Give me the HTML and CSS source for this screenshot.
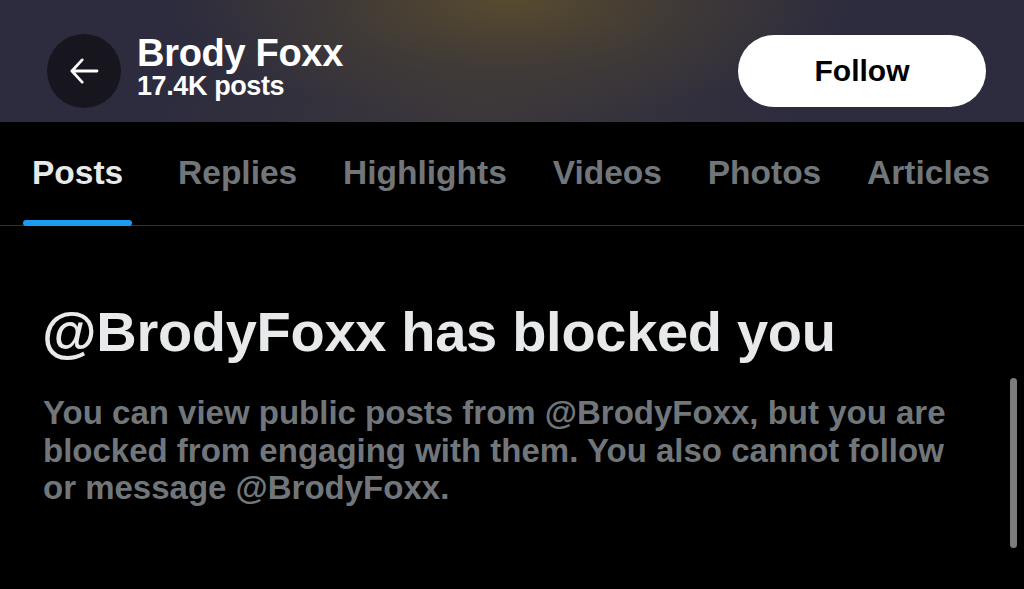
FILE: index.html
```html
<!DOCTYPE html>
<html lang="en">
<head>
<meta charset="utf-8">
<title>Brody Foxx</title>
<link rel="stylesheet" href="styles.css">
</head>
<body>
<div class="page">
  <header class="banner">
    <div class="banner-left">
      <button class="back" aria-label="Back">
        <svg viewBox="0 0 32 28" width="30" height="26"><path d="M30 14H3M14 2L3 14l11 12" fill="none" stroke="#fff" stroke-width="3" stroke-linecap="round" stroke-linejoin="round"/></svg>
      </button>
      <div class="who">
        <div class="name">Brody Foxx</div>
        <div class="count">17.4K posts</div>
      </div>
    </div>
    <button class="follow">Follow</button>
  </header>
  <nav class="tabs">
    <div class="tab active">Posts</div>
    <div class="tab">Replies</div>
    <div class="tab">Highlights</div>
    <div class="tab">Videos</div>
    <div class="tab">Photos</div>
    <div class="tab">Articles</div>
  </nav>
  <main class="content">
    <h1 class="title">@BrodyFoxx has blocked you</h1>
    <p class="desc">You can view public posts from @BrodyFoxx, but you are blocked from engaging with them. You also cannot follow or message @BrodyFoxx.</p>
    <div class="scrollbar"></div>
  </main>
</div>
</body>
</html>
```
FILE: styles.css
```css
* { box-sizing: border-box; }
html, body { margin: 0; padding: 0; background: #000; }
body {
  font-family: "Liberation Sans", Arial, sans-serif;
  font-weight: 700;
  width: 1024px;
  height: 589px;
  overflow: hidden;
}
.page { display: flex; flex-direction: column; height: 589px; }
.banner {
  height: 122px;
  display: flex;
  align-items: center;
  justify-content: space-between;
  padding: 20px 38px 0 47px;
  background:
    radial-gradient(ellipse 340px 120px at 510px 0px, rgba(92,78,45,0.9), rgba(75,66,50,0.55) 55%, rgba(0,0,0,0) 100%),
    radial-gradient(ellipse 320px 130px at 480px 122px, rgba(66,60,58,0.7), rgba(0,0,0,0) 100%),
    #2d2c3e;
}
.banner-left { display: flex; align-items: center; gap: 16px; }
.back {
  width: 74px; height: 74px;
  border-radius: 50%;
  border: 0;
  background: #17161f;
  display: flex; align-items: center; justify-content: center;
  padding: 0;
}
.who { display: flex; flex-direction: column; margin-top: -10px; }
.name { color: #fff; font-size: 38px; line-height: 40px; letter-spacing: -0.3px; }
.count { color: #fff; font-size: 27px; line-height: 26px; letter-spacing: -0.4px; }
.follow {
  width: 248px; height: 72px;
  border: 0;
  border-radius: 36px;
  background: #fff;
  color: #000;
  font-family: "Liberation Sans", Arial, sans-serif;
  font-weight: 700;
  font-size: 30px;
}
.tabs {
  display: flex;
  justify-content: space-between;
  padding: 0 34px 0 23px;
  border-bottom: 1px solid #2f3336;
  height: 104px;
}
.tab {
  color: #71767b;
  font-size: 33.5px;
  padding-top: 32px;
  position: relative;
}
.tab.active { color: #e7e9ea; padding: 32px 9px 0; }
.tab.active::after {
  content: "";
  position: absolute;
  left: 0; right: 0; bottom: -1px;
  height: 6px;
  border-radius: 3px;
  background: #1d9bf0;
}
.content { position: relative; flex: 1; padding: 74px 40px 0 42px; }
.title {
  margin: 0;
  color: #e7e9ea;
  font-size: 56px;
  line-height: 64px;
  letter-spacing: -0.3px;
}
.desc {
  margin: 30px 0 0 1px;
  width: 920px;
  color: #71767b;
  font-size: 33px;
  line-height: 37.5px;
}
.scrollbar {
  position: absolute;
  right: 7px;
  top: 152px;
  width: 7px;
  height: 170px;
  border-radius: 4px;
  background: #7c7c7c;
}
```
